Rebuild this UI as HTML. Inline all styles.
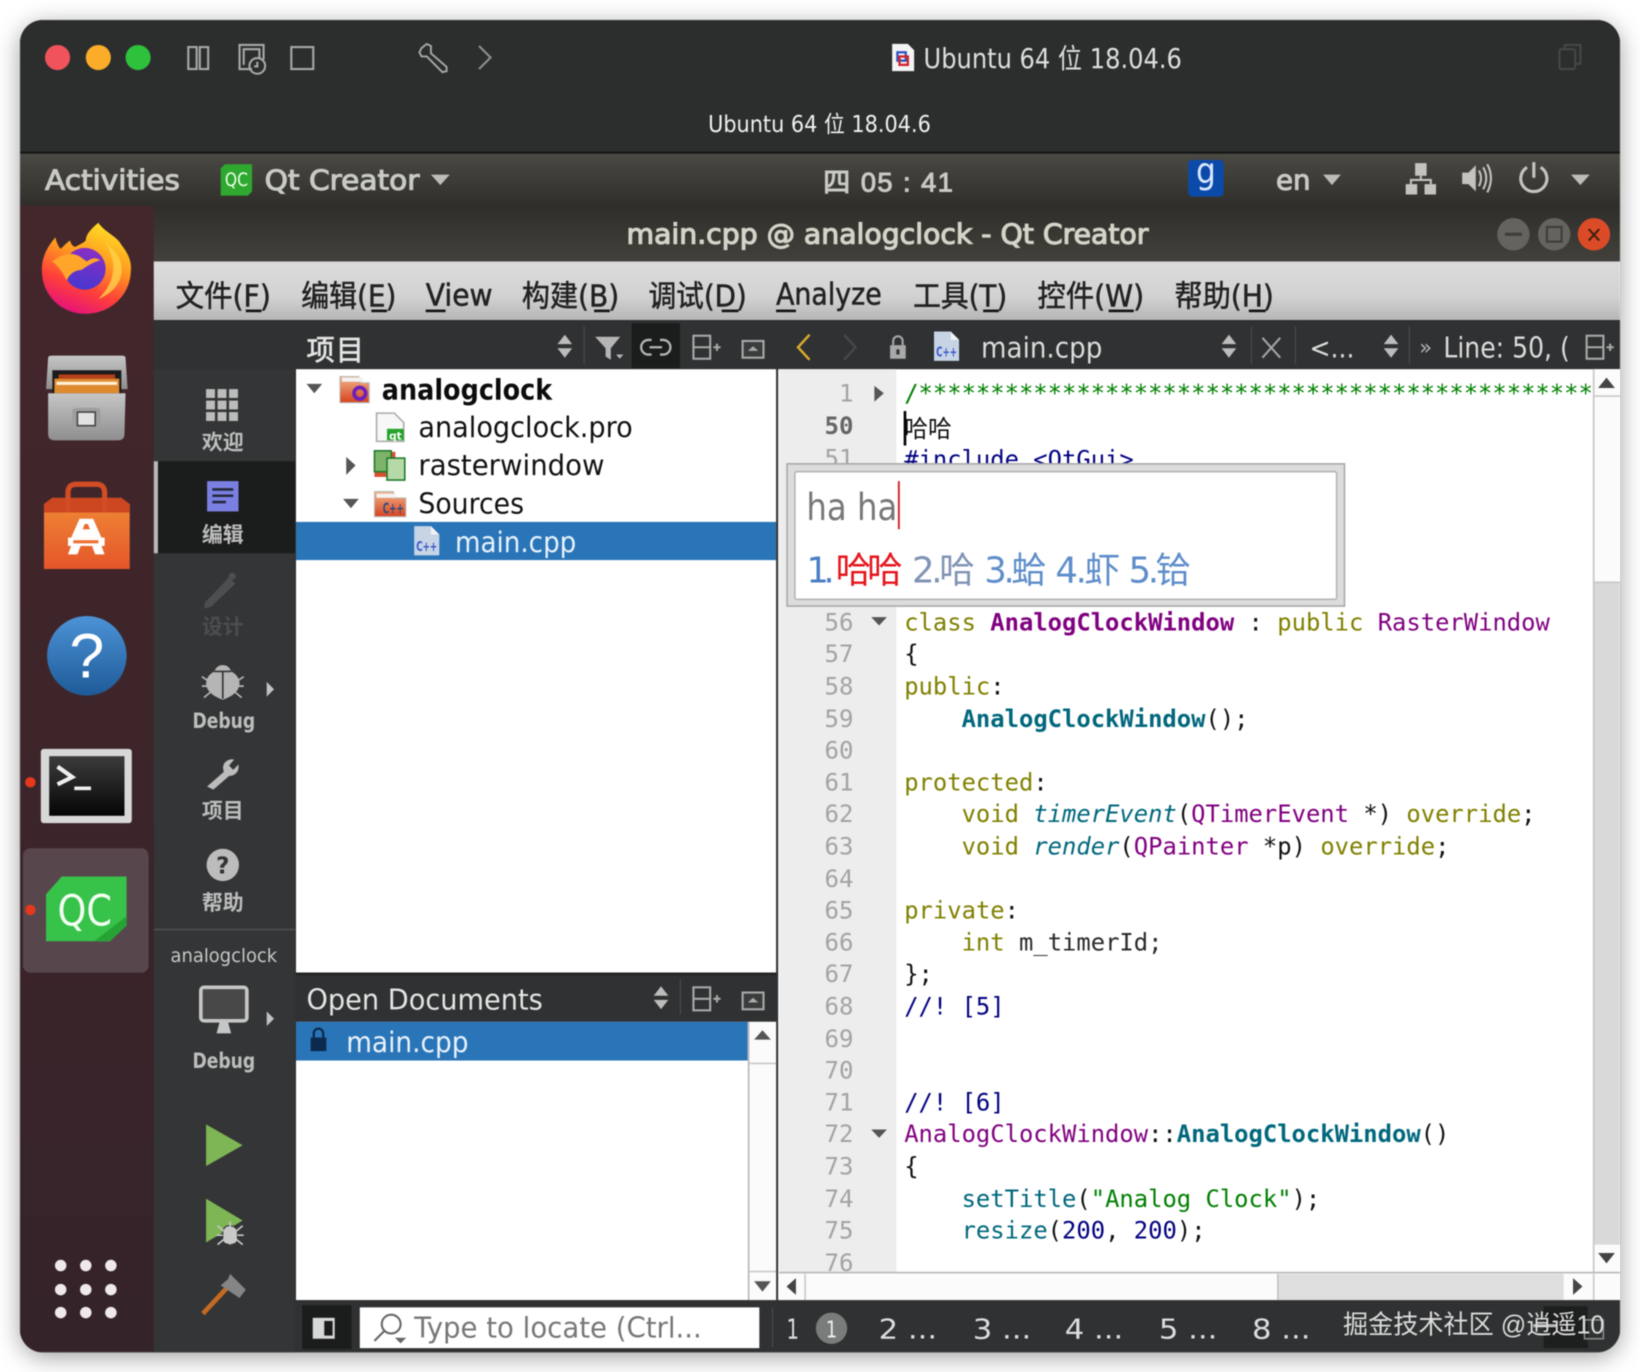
<!DOCTYPE html>
<html><head><meta charset="utf-8">
<style>
html,body{margin:0;padding:0;background:#fff;width:1640px;height:1372px;overflow:hidden}
#s{position:absolute;left:20px;top:20px;width:1600px;height:1332px;border-radius:24px;box-shadow:0 5px 24px rgba(0,0,0,.38)}
svg{position:absolute;left:0;top:0;filter:blur(.55px)}
text{font-family:"DejaVu Sans","Noto Sans CJK SC",sans-serif;white-space:pre}
.cjk{font-family:"Liberation Sans","Noto Sans CJK SC",sans-serif}
.code text{font-family:"DejaVu Sans Mono","Noto Sans CJK SC",monospace;font-size:23px}
.ln text{font-family:"DejaVu Sans Mono",monospace;font-size:23px;fill:#a3a3a3;text-anchor:end}
.k{fill:#808000}.t{fill:#800080}.tb{fill:#800080;font-weight:700}.f{fill:#00677c}.fb{fill:#00677c;font-weight:700}.fi{fill:#00677c;font-style:italic}.g{fill:#008000}.n{fill:#000080}.d{fill:#111}
.menu{font-size:29px;fill:#222;stroke:#222;stroke-width:.5px}
.mode{font-size:20px;fill:#bdbdbd;font-weight:700;text-anchor:middle}
.pt{font-size:26px;fill:#c9c9c6;stroke:#c9c9c6;stroke-width:1px}
</style></head><body>
<div id="s"></div>
<svg width="1640" height="1372" viewBox="0 0 1568 1311.8" xmlns="http://www.w3.org/2000/svg">
<defs>
<clipPath id="w"><rect x="19" y="19" width="1530" height="1274" rx="22"/></clipPath>
<clipPath id="ed"><rect x="745" y="353" width="778" height="864"/></clipPath>
<clipPath id="lc"><rect x="1370" y="310" width="130" height="44"/></clipPath>
<linearGradient id="pn" x1="0" x2="0" y1="0" y2="1"><stop offset="0" stop-color="#4b4943"/><stop offset="1" stop-color="#302e2a"/></linearGradient>
<linearGradient id="tt" x1="0" x2="0" y1="0" y2="1"><stop offset="0" stop-color="#302e2a"/><stop offset="1" stop-color="#43413c"/></linearGradient>
<linearGradient id="mn" x1="0" x2="0" y1="0" y2="1"><stop offset="0" stop-color="#dcdcdc"/><stop offset=".6" stop-color="#d2d2d2"/><stop offset="1" stop-color="#b6b6b6"/></linearGradient>
<linearGradient id="dk" x1="0" x2="0" y1="0" y2="1"><stop offset="0" stop-color="#44272b"/><stop offset="1" stop-color="#35232a"/></linearGradient>
<linearGradient id="ff" x1=".75" x2=".35" y1="0" y2="1"><stop offset="0" stop-color="#ffe226"/><stop offset=".4" stop-color="#ff9a1f"/><stop offset=".72" stop-color="#ff3f3a"/><stop offset="1" stop-color="#e5127a"/></linearGradient>
<linearGradient id="pu" x1=".6" x2=".3" y1="0" y2="1"><stop offset="0" stop-color="#8a2fc4"/><stop offset="1" stop-color="#4338d0"/></linearGradient>
<linearGradient id="gy" x1="0" x2="0" y1="0" y2="1"><stop offset="0" stop-color="#c6c6c6"/><stop offset="1" stop-color="#8e8e8e"/></linearGradient>
<linearGradient id="or" x1="0" x2="0" y1="0" y2="1"><stop offset="0" stop-color="#f08a36"/><stop offset="1" stop-color="#e5562a"/></linearGradient>
<linearGradient id="bl" x1="0" x2="0" y1="0" y2="1"><stop offset="0" stop-color="#4c93d6"/><stop offset="1" stop-color="#1e5a98"/></linearGradient>
<linearGradient id="tm" x1="0" x2="0" y1="0" y2="1"><stop offset="0" stop-color="#3c3c3c"/><stop offset="1" stop-color="#050505"/></linearGradient>
<linearGradient id="fo" x1="0" x2="0" y1="0" y2="1"><stop offset="0" stop-color="#f2b48a"/><stop offset="1" stop-color="#d4431d"/></linearGradient>
<g id="ud"><path d="M-7 -2 L0 -11 L7 -2Z M-7 2 L0 11 L7 2Z" fill="#bcbcbc"/></g>
<g id="sp" fill="none" stroke="#a9a9a9" stroke-width="2"><rect x="1" y="1" width="16" height="22"/><path d="M1 12H17M20 12H27M23.5 8.500V15.500"/></g>
<g id="cl"><rect x="1" y="1" width="20" height="16" fill="#3a3c3d" stroke="#a9a9a9" stroke-width="2"/><path d="M6 10.500L11 6L16 10.500Z" fill="#a9a9a9"/></g>
<g id="cpp"><path d="M0 0H16L24 8V28H0Z" fill="#c6d4e6"/><path d="M16 0V8H24" fill="#f2f2f2"/><text x="2" y="24" font-size="13" font-weight="700" fill="#3b55c8" textLength="20" lengthAdjust="spacingAndGlyphs">C++</text></g>
</defs>
<g clip-path="url(#w)">
<rect x="19" y="19" width="1530" height="1274" fill="#2c2e2e"/>
<!-- mac title -->
<circle cx="55" cy="55" r="12" fill="#f0545a"/><circle cx="94" cy="55" r="12" fill="#fbac28"/><circle cx="132" cy="55" r="12" fill="#2dc13c"/>
<g fill="none" stroke="#a8a8a8" stroke-width="2">
<rect x="180" y="45" width="8" height="21"/><rect x="191" y="45" width="8" height="21"/>
<path d="M241 66H229V43H252V57"/><path d="M233 62V47H248V55"/><circle cx="246" cy="63" r="7.500"/><path d="M246 59V63.500H243"/>
<rect x="278.500" y="45" width="21" height="21"/>
<path d="M403 46L408 42L412 44V51L427 64V68L423 69L408 54H403L401 50Z" stroke-width="1.800"/>
<path d="M458 44L469 55L458 66" stroke="#8f8f8f"/>
</g>
<path d="M853 42H868L874 48V68H853Z" fill="#f4f4f4"/><rect x="858" y="50" width="8" height="8" fill="none" stroke="#2f55c0" stroke-width="2.200"/><rect x="860" y="54" width="8" height="8" fill="none" stroke="#d2222a" stroke-width="2.200"/>
<text x="883" y="65" font-size="26" fill="#dedede" textLength="247" lengthAdjust="spacingAndGlyphs">Ubuntu 64 位 18.04.6</text>
<g fill="none" stroke="#454747" stroke-width="2"><rect x="1491" y="47" width="15" height="19" rx="2"/><path d="M1496 47V43H1511V61H1506"/></g>
<text x="677" y="126" font-size="22" fill="#f0f0f0" textLength="213" lengthAdjust="spacingAndGlyphs">Ubuntu 64 位 18.04.6</text>
<rect x="19" y="145" width="1530" height="2" fill="#151616"/>
<!-- ubuntu panel -->
<rect x="19" y="147" width="1530" height="50" fill="url(#pn)"/>
<rect x="147" y="197" width="1402" height="53" fill="url(#tt)"/>
<rect x="19" y="197" width="128" height="1096" fill="url(#dk)"/>
<text class="pt" x="43" y="181" textLength="129" lengthAdjust="spacingAndGlyphs">Activities</text>
<path d="M215 157H241V183L237 187H211V161Z" fill="#2fa82f"/><text x="226" y="178" font-size="18" fill="#eaffea" text-anchor="middle" textLength="22" lengthAdjust="spacingAndGlyphs">QC</text>
<text class="pt" x="253" y="181" textLength="148" lengthAdjust="spacingAndGlyphs">Qt Creator</text>
<path d="M412 167H430L421 177Z" fill="#bdbcb8"/>
<text class="pt cjk" x="787" y="183" textLength="124">四 05 : 41</text>
<rect x="1136" y="153" width="34" height="35" rx="4" fill="#0b4aa8"/><text x="1153" y="175" font-size="34" fill="#d8e6ff" text-anchor="middle" textLength="19" lengthAdjust="spacingAndGlyphs">g</text>
<text class="pt" x="1220" y="181" textLength="33" lengthAdjust="spacingAndGlyphs">en</text>
<path d="M1265 167H1282L1273.500 177Z" fill="#bdbcb8"/>
<path d="M1353 156H1364V168H1353ZM1344 176H1355V186H1344ZM1362 176H1373V186H1362Z" fill="#c4c3c0"/><path d="M1358.500 168V172M1349 176V172H1368V176" stroke="#c4c3c0" stroke-width="2" fill="none"/>
<path d="M1398 165H1404L1411 158V183L1404 176H1398Z" fill="#c4c3c0"/><path d="M1414 163Q1418 170 1414 178M1418 160Q1424 170 1418 181M1422 157Q1429 170 1422 184" stroke="#c4c3c0" stroke-width="2" fill="none"/>
<path d="M1460 160A12.500 12.500 0 1 0 1473 160M1466.500 155V170" stroke="#c4c3c0" stroke-width="3" fill="none"/>
<path d="M1502 167H1520L1511 177Z" fill="#bdbcb8"/>
<!-- title -->
<text x="599" y="233" font-size="26" fill="#d6d3c9" stroke="#d6d3c9" stroke-width="1.100" textLength="499" lengthAdjust="spacingAndGlyphs">main.cpp @ analogclock - Qt Creator</text>
<circle cx="1447" cy="224" r="15.500" fill="#65635e"/><rect x="1439" y="222.500" width="16" height="3" fill="#3f3d39"/>
<circle cx="1486" cy="224" r="15.500" fill="#65635e"/><rect x="1479" y="217" width="14" height="14" fill="none" stroke="#3f3d39" stroke-width="2"/>
<circle cx="1524" cy="224" r="15.500" fill="#dc4b28"/><path d="M1519 219L1529 230M1529 219L1519 230" stroke="#40200f" stroke-width="2"/>
<!-- menu -->
<rect x="147" y="250" width="1402" height="56" fill="url(#mn)"/>
<g class="cjk">
<text class="menu" x="168" y="293" textLength="91" lengthAdjust="spacingAndGlyphs">文件(F)</text>
<text class="menu" x="288" y="293" textLength="91" lengthAdjust="spacingAndGlyphs">编辑(E)</text>
<text class="menu" x="407" y="292" textLength="64" lengthAdjust="spacingAndGlyphs">View</text>
<text class="menu" x="499" y="293" textLength="93" lengthAdjust="spacingAndGlyphs">构建(B)</text>
<text class="menu" x="620" y="293" textLength="94" lengthAdjust="spacingAndGlyphs">调试(D)</text>
<text class="menu" x="742" y="291" textLength="101" lengthAdjust="spacingAndGlyphs">Analyze</text>
<text class="menu" x="873" y="293" textLength="90" lengthAdjust="spacingAndGlyphs">工具(T)</text>
<text class="menu" x="992" y="293" textLength="102" lengthAdjust="spacingAndGlyphs">控件(W)</text>
<text class="menu" x="1123" y="293" textLength="95" lengthAdjust="spacingAndGlyphs">帮助(H)</text>
</g>
<g fill="#111"><rect x="235" y="296" width="15" height="2.500"/><rect x="355" y="296" width="15" height="2.500"/><rect x="407" y="296" width="19" height="2.500"/><rect x="568" y="296" width="15" height="2.500"/><rect x="690" y="296" width="16" height="2.500"/><rect x="742" y="296" width="19" height="2.500"/><rect x="940" y="296" width="15" height="2.500"/><rect x="1060" y="296" width="24" height="2.500"/><rect x="1194" y="296" width="16" height="2.500"/></g>
<!-- toolbars -->
<rect x="147" y="306" width="1402" height="987" fill="#2f3132"/>
<rect x="147" y="353" width="135" height="940" fill="#333536"/>
<rect x="147" y="306" width="135" height="47" fill="#2f3132"/>
<text x="293" y="344" font-size="27" fill="#e4e4e4" stroke="#e4e4e4" stroke-width=".6" class="cjk" textLength="55">项目</text>
<use href="#ud" x="540" y="331"/><rect x="558" y="312" width="1" height="36" fill="#4c4e4f"/>
<path d="M569 322H593L584 333V344L579 341V333Z" fill="#b5b5b5"/><path d="M589 339H596L592.500 343Z" fill="#b5b5b5"/>
<rect x="604" y="309" width="46" height="43" fill="#1b1c1c"/>
<path d="M623 325H620A7 7 0 0 0 620 339H623M631 325H634A7 7 0 0 1 634 339H631M621 332H633" fill="none" stroke="#b5b5b5" stroke-width="2.200"/>
<use href="#sp" x="662" y="320"/><use href="#cl" x="709" y="325"/>
<path d="M774 320L763 332L774 344" fill="none" stroke="#d9a92c" stroke-width="2.400"/>
<path d="M807 320L818 332L807 344" fill="none" stroke="#484a4a" stroke-width="2.200"/>
<rect x="851" y="330" width="15" height="13" fill="#a9a9a9"/><path d="M854 330V326A4.500 4.500 0 0 1 863 326V330" fill="none" stroke="#a9a9a9" stroke-width="2"/><rect x="857" y="334" width="3" height="5" fill="#333"/>
<use href="#cpp" x="893" y="317"/>
<text x="938" y="342" font-size="27" fill="#dcdcdc" textLength="116" lengthAdjust="spacingAndGlyphs">main.cpp</text>
<use href="#ud" x="1175" y="331"/><rect x="1196" y="312" width="1" height="36" fill="#4c4e4f"/>
<path d="M1207 323L1224 342M1224 323L1207 342" stroke="#a5a5a5" stroke-width="2"/><rect x="1238" y="312" width="1" height="36" fill="#4c4e4f"/>
<text x="1252" y="342" font-size="26" fill="#dcdcdc" textLength="43" lengthAdjust="spacingAndGlyphs">&lt;...</text>
<use href="#ud" x="1330" y="331"/><rect x="1347" y="312" width="1" height="36" fill="#4c4e4f"/>
<text x="1357" y="339" font-size="20" fill="#b5b5b5">»</text>
<g clip-path="url(#lc)"><text x="1380" y="342" font-size="27" fill="#dcdcdc" textLength="190" lengthAdjust="spacingAndGlyphs">Line: 50, (Col: 1</text></g>
<use href="#sp" x="1516" y="320"/>
<!-- mode bar -->
<g fill="#bcbcbc"><rect x="197" y="372" width="8.500" height="8.500"/><rect x="208" y="372" width="8.500" height="8.500"/><rect x="219" y="372" width="8.500" height="8.500"/><rect x="197" y="383" width="8.500" height="8.500"/><rect x="208" y="383" width="8.500" height="8.500"/><rect x="219" y="383" width="8.500" height="8.500"/><rect x="197" y="394" width="8.500" height="8.500"/><rect x="208" y="394" width="8.500" height="8.500"/><rect x="219" y="394" width="8.500" height="8.500"/></g>
<text class="mode cjk" x="213" y="430">欢迎</text>
<rect x="147" y="441" width="135" height="88" fill="#1b1c1c"/><rect x="147" y="441" width="4" height="88" fill="#b9b9b9"/>
<rect x="198" y="460" width="30" height="29" fill="#7a80e2"/><path d="M203 468H223M203 474H223M203 480H216" stroke="#25283c" stroke-width="2.500"/>
<text class="mode cjk" x="213" y="518">编辑</text>
<path d="M196 576L219 552L225 558L202 580L195 582Z" fill="#4c4f50"/><circle cx="222" cy="551" r="3.500" fill="#4c4f50"/>
<text class="mode cjk" x="213" y="606" style="fill:#4b4e4f">设计</text>
<path d="M213 636Q219 636 221 642Q229 646 229 654Q228 664 213 669Q198 664 197 654Q197 646 205 642Q207 636 213 636Z" fill="#b5b5b5"/><path d="M213 642V668M205 642H221" stroke="#333" stroke-width="1.600"/><path d="M193 647L199 651M233 647L227 651M193 656H198M233 656H228M195 667L201 662M231 667L225 662" stroke="#b5b5b5" stroke-width="1.600"/>
<path d="M255 652L262 659L255 666Z" fill="#c2c2c2"/>
<text x="214" y="696" font-size="20" font-weight="700" fill="#bdbdbd" text-anchor="middle" textLength="60" lengthAdjust="spacingAndGlyphs">Debug</text>
<path d="M198 752L214 738Q211 729 220 726L224 726L219 732L223 736L228 731Q229 741 219 742L204 755Z" fill="#bcbcbc"/>
<text class="mode cjk" x="213" y="782">项目</text>
<circle cx="213" cy="827" r="15.500" fill="#bcbcbc"/><text x="213" y="835" font-size="22" font-weight="700" fill="#333" text-anchor="middle">?</text>
<text class="mode cjk" x="213" y="870">帮助</text>
<rect x="147" y="888" width="135" height="1.500" fill="#4e5051"/>
<text x="214" y="920" font-size="18" fill="#c8c8c8" text-anchor="middle" textLength="102" lengthAdjust="spacingAndGlyphs">analogclock</text>
<rect x="192" y="944" width="44" height="32" rx="3" fill="#484848" stroke="#c6c6c6" stroke-width="3.500"/><path d="M210 977H218L221 988H207Z" fill="#c6c6c6"/>
<path d="M255 967L262 974L255 981Z" fill="#c2c2c2"/>
<text x="214" y="1021" font-size="20" font-weight="700" fill="#bdbdbd" text-anchor="middle" textLength="60" lengthAdjust="spacingAndGlyphs">Debug</text>
<path d="M197 1075L232 1095L197 1115Z" fill="#7eb555"/>
<path d="M197 1146L232 1167L197 1188Z" fill="#7eb555"/>
<path d="M219 1172Q226 1172 227 1178V1186Q226 1190 220 1190Q214 1190 213 1186V1178Q214 1172 219 1172Z" fill="#c9c9c9" stroke="#333" stroke-width="1"/><path d="M220 1172V1190M208 1172L214 1177M232 1172L226 1177M207 1181H213M233 1181H227M208 1190L214 1185M232 1190L226 1185M220 1168V1172" stroke="#c9c9c9" stroke-width="1.600"/>
<path d="M194 1256L222 1226" stroke="#c46a22" stroke-width="4.500"/><path d="M220 1218L235 1233L229 1241L211 1229L218 1223Z" fill="#858585"/>
<!-- project tree -->
<rect x="283" y="353" width="459" height="577" fill="#fff"/>
<path d="M293 367H308L300.500 376Z" fill="#555"/>
<path d="M325 360H343L345 366H353V385H325Z" fill="url(#fo)" stroke="#bbb" stroke-width="1"/><circle cx="344" cy="376" r="5.500" fill="none" stroke="#6a1fbf" stroke-width="3.500"/><rect x="327" y="361" width="20" height="4" fill="#f2f2f2"/>
<text x="365" y="382" font-size="27" font-weight="700" fill="#0c0c0c" textLength="163" lengthAdjust="spacingAndGlyphs">analogclock</text>
<path d="M360 395H377L386 404V422H360Z" fill="#f7f7f7" stroke="#aaa" stroke-width="1.500"/><rect x="370" y="410" width="16" height="11" fill="#26a32a"/><text x="378" y="420" font-size="10" font-weight="700" fill="#fff" text-anchor="middle">qt</text>
<text x="400" y="418" font-size="27" fill="#111" textLength="205" lengthAdjust="spacingAndGlyphs">analogclock.pro</text>
<path d="M331 437L340 445L331 454Z" fill="#555"/>
<rect x="358" y="432" width="20" height="24" fill="#d7512f"/><rect x="358" y="431" width="16" height="20" fill="#7eb36a" stroke="#1e7a2a" stroke-width="1.500"/><rect x="370" y="438" width="17" height="21" fill="#b6d9a8" stroke="#1e7a2a" stroke-width="1.500"/>
<text x="400" y="454" font-size="27" fill="#111" textLength="178" lengthAdjust="spacingAndGlyphs">rasterwindow</text>
<path d="M328 477H343L335.500 486Z" fill="#555"/>
<path d="M358 470H376L378 476H388V494H358Z" fill="url(#fo)" stroke="#bbb" stroke-width="1"/><rect x="360" y="472" width="18" height="4" fill="#f2f2f2"/><text x="366" y="491" font-size="14" font-weight="700" fill="#2f4a80" textLength="20" lengthAdjust="spacingAndGlyphs">C++</text>
<text x="400" y="491" font-size="27" fill="#111" textLength="101" lengthAdjust="spacingAndGlyphs">Sources</text>
<rect x="283" y="499" width="459" height="36.500" fill="#2a75b8"/>
<use href="#cpp" x="396" y="503"/>
<text x="435" y="528" font-size="27" fill="#e8f2fb" textLength="116" lengthAdjust="spacingAndGlyphs">main.cpp</text>
<!-- open docs -->
<rect x="283" y="930" width="459" height="47" fill="#2f3132"/><rect x="283" y="930" width="459" height="2" fill="#1f2020"/>
<text x="293" y="965" font-size="27" fill="#e4e4e4" textLength="226" lengthAdjust="spacingAndGlyphs">Open Documents</text>
<use href="#ud" x="632" y="954"/><rect x="650" y="936" width="1" height="34" fill="#4c4e4f"/>
<use href="#sp" x="662" y="943"/><use href="#cl" x="709" y="948"/>
<rect x="283" y="977" width="459" height="266" fill="#fff"/>
<rect x="283" y="977" width="432" height="37" fill="#2a75b8"/>
<rect x="297" y="992" width="15" height="13" fill="#0c2a4d"/><path d="M300 992V988A4.500 4.500 0 0 1 309 988V992" fill="none" stroke="#0c2a4d" stroke-width="2.200"/>
<text x="331" y="1006" font-size="27" fill="#e8f2fb" textLength="117" lengthAdjust="spacingAndGlyphs">main.cpp</text>
<rect x="715" y="977" width="27" height="266" fill="#fbfbfb"/><rect x="715" y="977" width="1.500" height="266" fill="#b5b5b5"/>
<rect x="716" y="1016" width="26" height="1.500" fill="#c8c8c8"/><rect x="716" y="1215" width="26" height="1.500" fill="#c8c8c8"/>
<path d="M721 994H737L729 985Z M721 1225H737L729 1235Z" fill="#555"/>
<!-- status -->
<rect x="289" y="1248" width="47" height="42" fill="#1b1c1c"/><rect x="299" y="1260" width="21" height="20" fill="#d8d8d8"/><rect x="310" y="1263" width="8" height="14" fill="#1b1c1c"/>
<rect x="344" y="1250" width="382" height="39" fill="#fff"/>
<circle cx="374" cy="1266" r="9" fill="none" stroke="#666" stroke-width="2"/><path d="M367 1273L358 1282M380 1280H386L383 1283Z" stroke="#666" stroke-width="2" fill="#666"/>
<text x="396" y="1279" font-size="27" fill="#777" textLength="275" lengthAdjust="spacingAndGlyphs">Type to locate (Ctrl...</text>
<rect x="738" y="1250" width="1" height="38" fill="#4c4e4f"/>
<g font-size="26" fill="#dedede">
<text x="752" y="1280" textLength="12" lengthAdjust="spacingAndGlyphs">1</text>
<circle cx="795" cy="1270" r="15" fill="#7a7b7b"/><text x="795" y="1279" font-size="22" fill="#eee" text-anchor="middle" textLength="11" lengthAdjust="spacingAndGlyphs">1</text>
<text x="840" y="1280" textLength="56" lengthAdjust="spacingAndGlyphs">2 ...</text>
<text x="930" y="1280" textLength="56" lengthAdjust="spacingAndGlyphs">3 ...</text>
<text x="1018" y="1280" textLength="56" lengthAdjust="spacingAndGlyphs">4 ...</text>
<text x="1108" y="1280" textLength="56" lengthAdjust="spacingAndGlyphs">5 ...</text>
<text x="1197" y="1280" textLength="56" lengthAdjust="spacingAndGlyphs">8 ...</text>
</g>
<rect x="1476" y="1249" width="42" height="40" fill="#1d1e1e"/>
<rect x="1515" y="1262" width="18" height="18" fill="none" stroke="#8a8a8a" stroke-width="1.500"/><rect x="1466" y="1266" width="22" height="3" fill="#bbb"/>
<text x="1284" y="1275" font-size="25" fill="#dcdcdc" class="cjk" textLength="250" lengthAdjust="spacingAndGlyphs">掘金技术社区 @逍遥10</text>
<!-- editor -->
<rect x="744" y="353" width="805" height="890" fill="#fff"/>
<rect x="745" y="353" width="112" height="864" fill="#ededed"/>
<g clip-path="url(#ed)">
<g class="ln">
<text x="816" y="384">1</text><text x="816" y="415" style="fill:#666;font-weight:700">50</text><text x="816" y="446">51</text>
<text x="816" y="603">56</text><text x="816" y="633">57</text><text x="816" y="664">58</text><text x="816" y="695">59</text><text x="816" y="725">60</text><text x="816" y="756">61</text><text x="816" y="786">62</text><text x="816" y="817">63</text><text x="816" y="848">64</text><text x="816" y="878">65</text><text x="816" y="909">66</text><text x="816" y="939">67</text><text x="816" y="970">68</text><text x="816" y="1001">69</text><text x="816" y="1031">70</text><text x="816" y="1062">71</text><text x="816" y="1092">72</text><text x="816" y="1123">73</text><text x="816" y="1154">74</text><text x="816" y="1184">75</text><text x="816" y="1215">76</text>
</g>
<path d="M836 369L845 376L836 384Z" fill="#555"/><path d="M833 590H848L840.500 598Z M833 1080H848L840.500 1088Z" fill="#555"/>
<g class="code" transform="translate(864.500 0) scale(.991 1)">
<text y="384" class="g">/*********************************************************</text>
<text y="418" class="d" font-size="22">哈哈</text>
<text y="447" class="n">#include &lt;QtGui&gt;</text>
<text y="603"><tspan class="k">class</tspan> <tspan class="tb">AnalogClockWindow</tspan> <tspan class="d">:</tspan> <tspan class="k">public</tspan> <tspan class="t">RasterWindow</tspan></text>
<text y="633" class="d">{</text>
<text y="664" class="k">public<tspan class="d">:</tspan></text>
<text y="695">    <tspan class="fb">AnalogClockWindow</tspan><tspan class="d">();</tspan></text>
<text y="756" class="k">protected<tspan class="d">:</tspan></text>
<text y="786">    <tspan class="k">void</tspan> <tspan class="fi">timerEvent</tspan><tspan class="d">(</tspan><tspan class="t">QTimerEvent</tspan><tspan class="d"> *)</tspan> <tspan class="k">override</tspan><tspan class="d">;</tspan></text>
<text y="817">    <tspan class="k">void</tspan> <tspan class="fi">render</tspan><tspan class="d">(</tspan><tspan class="t">QPainter</tspan><tspan class="d"> *p)</tspan> <tspan class="k">override</tspan><tspan class="d">;</tspan></text>
<text y="878" class="k">private<tspan class="d">:</tspan></text>
<text y="909">    <tspan class="k">int</tspan> <tspan class="d" style="fill:#2a2a2a">m_timerId;</tspan></text>
<text y="939" class="d">};</text>
<text y="970" class="n">//! [5]</text>
<text y="1062" class="n">//! [6]</text>
<text y="1092"><tspan class="t">AnalogClockWindow</tspan><tspan class="d">::</tspan><tspan class="fb">AnalogClockWindow</tspan><tspan class="d">()</tspan></text>
<text y="1123" class="d">{</text>
<text y="1154">    <tspan class="f">setTitle</tspan><tspan class="d">(</tspan><tspan class="g">"Analog Clock"</tspan><tspan class="d">);</tspan></text>
<text y="1184">    <tspan class="f">resize</tspan><tspan class="d">(</tspan><tspan class="n">200</tspan><tspan class="d">, </tspan><tspan class="n">200</tspan><tspan class="d">);</tspan></text>
</g>
<rect x="864" y="393" width="2.500" height="33" fill="#000"/>
</g>
<!-- v scrollbar -->
<rect x="1523" y="353" width="26" height="864" fill="#d9d9d9"/><rect x="1523" y="353" width="1.500" height="864" fill="#c6c6c6"/>
<rect x="1524.500" y="353" width="24.500" height="204" fill="#fbfbfb"/><rect x="1524.500" y="556" width="24.500" height="1.500" fill="#c6c6c6"/><rect x="1524.500" y="378" width="24.500" height="1.500" fill="#c6c6c6"/>
<rect x="1524.500" y="1190" width="24.500" height="27" fill="#fbfbfb"/>
<path d="M1528 371H1544L1536 361Z M1528 1198H1544L1536 1208Z" fill="#444"/>
<!-- h scrollbar -->
<rect x="745" y="1217" width="804" height="26" fill="#fbfbfb"/><rect x="745" y="1216" width="804" height="1.500" fill="#b5b5b5"/>
<rect x="1221" y="1218" width="274" height="25" fill="#dedede"/><rect x="1221" y="1218" width="1.500" height="25" fill="#c2c2c2"/><rect x="769" y="1218" width="1.500" height="25" fill="#c8c8c8"/><rect x="1523" y="1218" width="1.500" height="25" fill="#c8c8c8"/>
<path d="M761 1222V1238L752 1230Z M1504 1222V1238L1513 1230Z" fill="#444"/>
<!-- popup -->
<rect x="752.500" y="443.500" width="533" height="136" fill="#dcdcdc" stroke="#a8a8a8" stroke-width="1.500"/>
<rect x="760" y="451" width="518" height="122" rx="2" fill="#fff" stroke="#b4b4b4" stroke-width="1.500"/>
<text x="771" y="497" font-size="36" fill="#777" textLength="87" lengthAdjust="spacingAndGlyphs">ha ha</text>
<rect x="858.500" y="460" width="1.800" height="46" fill="#d02020"/>
<g class="cjk" font-size="34">
<text x="771" y="557" fill="#4a7fc4" textLength="27">1.</text>
<text x="799" y="557" fill="#e6141b" textLength="64">哈哈</text>
<text x="872" y="557" fill="#7f93b4" textLength="60">2.哈</text>
<text x="941" y="557" fill="#5e8dca" textLength="60">3.蛤</text>
<text x="1009" y="557" fill="#5e8dca" textLength="62">4.虾</text>
<text x="1079" y="557" fill="#5e8dca" textLength="60">5.铪</text>
</g>
<!-- dock -->
<path d="M94 213C100 222 112 226 116 234C124 244 126 252 125 260C124 284 104 300 82 300C58 300 40 282 40 258C40 246 45 236 53 227C54 232 56 236 58 238C60 236 64 232 67 230C68 234 70 236 72 236C76 234 80 232 82 230C82 224 88 218 94 213Z" fill="url(#ff)"/>
<path d="M100 232C112 240 118 250 116 262C114 274 104 282 94 286C104 276 110 264 108 250C106 242 104 236 100 232Z" fill="#ffd24a" opacity=".8"/>
<circle cx="81" cy="257" r="20" fill="url(#pu)"/>
<path d="M50 250C58 244 66 240 76 245L83 250C88 246 92 246 96 249C90 250 84 254 78 258C72 258 66 262 64 268C60 262 58 256 50 250Z" fill="#ffa62a"/>
<path d="M46 342Q46 340 50 340H116Q120 340 120 342L122 372H44Z" fill="url(#gy)"/>
<rect x="50" y="354" width="66" height="22" fill="#1b1b1b"/><rect x="52" y="362" width="62" height="14" fill="#e08a30"/><rect x="54" y="365" width="58" height="3" fill="#fff1d8"/><rect x="56" y="358" width="54" height="4" fill="#b5401a"/>
<path d="M46 376H120L119 415Q119 421 113 421H52Q46 421 46 415Z" fill="url(#gy)"/>
<rect x="69" y="390" width="27" height="21" rx="3" fill="#9e9e9e"/><rect x="74" y="394" width="17" height="13" fill="#e2e2e2" stroke="#444" stroke-width="1.500"/>
<path d="M42 544V482L50 476H116L124 482V544Z" fill="url(#or)"/><path d="M42 482L50 476H116L124 482V490H42Z" fill="#cc4620"/>
<path d="M65 490V471Q65 463 73 463H92Q100 463 100 471V490" fill="none" stroke="#d44c24" stroke-width="5"/>
<path d="M76 496H89L97 514H68Z" fill="#fff"/><path d="M79 506H86L84 501H81Z" fill="#ec6a2e"/>
<rect x="65" y="514" width="35" height="8" fill="#fff"/><rect x="70" y="516.500" width="24" height="3" fill="#ef7030"/>
<path d="M68 522H77L74 530H65ZM88 522H97L100 530H91Z" fill="#fff"/>
<ellipse cx="83" cy="627" rx="38" ry="38" fill="url(#bl)"/><text x="83" y="648" font-size="60" fill="#fff" text-anchor="middle" class="cjk">?</text>
<rect x="39" y="716" width="87" height="71" rx="3" fill="#d8d8d8"/><rect x="47" y="723" width="72" height="57" fill="url(#tm)"/><path d="M55 733L69 743L55 750" fill="none" stroke="#eee" stroke-width="4"/><rect x="71" y="752" width="16" height="3.500" fill="#eee"/>
<rect x="22" y="811" width="120" height="119" rx="7" fill="#57474c"/>
<path d="M59 838H121V885L105 900H44V855Z" fill="#37c24a"/><path d="M121 876V885L105 900H90Z" fill="#27a336"/>
<text x="81" y="885" font-size="41" fill="#f2fff2" text-anchor="middle" textLength="52" lengthAdjust="spacingAndGlyphs">QC</text>
<circle cx="29" cy="748" r="5" fill="#e4391c"/><circle cx="29" cy="870" r="5" fill="#e4391c"/>
<g fill="#efe9e9"><circle cx="58" cy="1210" r="5.500"/><circle cx="82" cy="1210" r="5.500"/><circle cx="106" cy="1210" r="5.500"/><circle cx="58" cy="1233" r="5.500"/><circle cx="82" cy="1233" r="5.500"/><circle cx="106" cy="1233" r="5.500"/><circle cx="58" cy="1255" r="5.500"/><circle cx="82" cy="1255" r="5.500"/><circle cx="106" cy="1255" r="5.500"/></g>
</g>
</svg>
</body></html>
